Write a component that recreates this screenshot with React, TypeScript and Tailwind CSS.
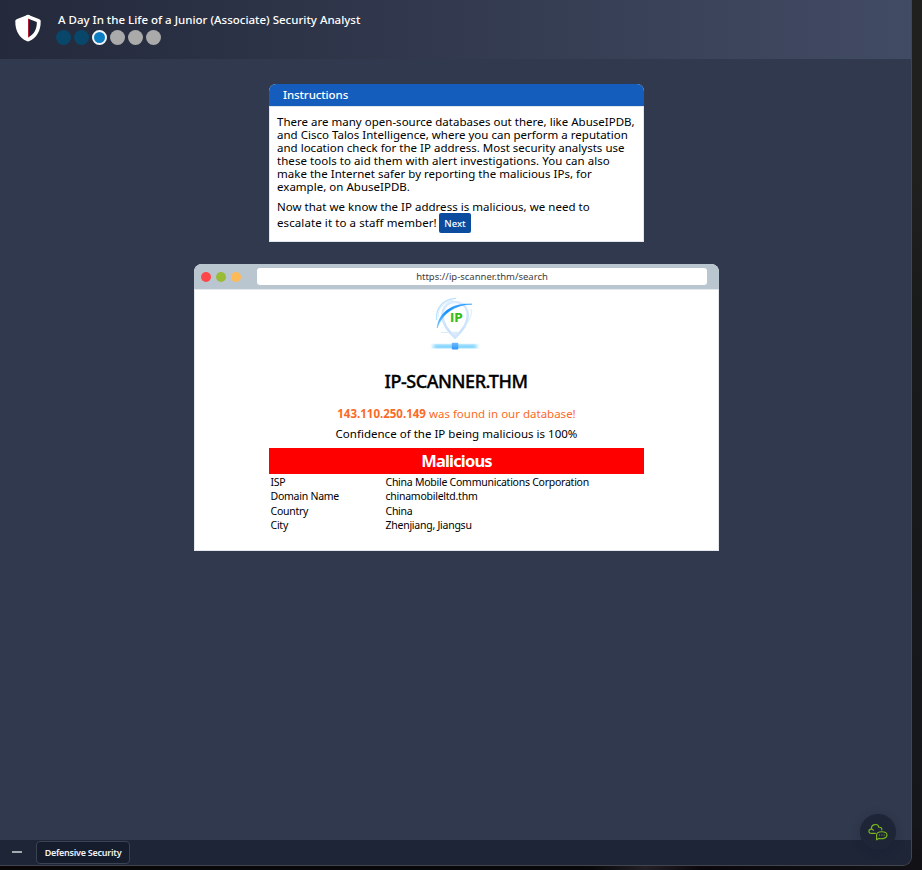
import React from "react";

const paragraph = [
  { text: "There are many open-source databases out there, like AbuseIPDB,", cls: "tracking-[0.01px]" },
  { text: "and Cisco Talos Intelligence, where you can perform a reputation", cls: "tracking-[0.01px]" },
  { text: "and location check for the IP address. Most security analysts use", cls: "tracking-[0.01px]" },
  { text: "these tools to aid them with alert investigations. You can also", cls: "tracking-[0.05px]" },
  { text: "make the Internet safer by reporting the malicious IPs, for", cls: "tracking-[0.02px]" },
  { text: "example, on AbuseIPDB.", cls: "tracking-[0.02px]" },
];

const details = [
  { label: "ISP", value: "China Mobile Communications Corporation", h: "h-[14px]" },
  { label: "Domain Name", value: "chinamobileltd.thm", h: "h-[14px]" },
  { label: "Country", value: "China", h: "h-[15px]" },
  { label: "City", value: "Zhenjiang, Jiangsu", h: "h-[14px]" },
];

function Shield() {
  return (
    <svg className="block" width="26" height="28" viewBox="0 0 26 28">
      <path d="M13 0.8 C14 0.8 14.6 1.2 15.5 1.7 L23.8 4.9 C25.3 5.4 25.7 6 25.7 7.4 C25.8 16.8 21.5 23.8 14.4 27 C13.4 27.5 12.6 27.5 11.6 27 C4.5 23.8 0.2 16.8 0.3 7.4 C0.3 6 0.7 5.4 2.2 4.9 L10.5 1.7 C11.4 1.2 12 0.8 13 0.8Z" fill="#fff" />
      <path d="M13.4 4.8 L21.8 8 C22 14.7 19.3 20.3 13.4 23.3Z" fill="#20263a" />
      <path d="M13.5 4.8V23.3" stroke="#b01c33" strokeWidth="1" />
    </svg>
  );
}

function ScannerLogo() {
  return (
    <svg className="block" width="54" height="58" viewBox="0 0 54 58">
      <defs>
        <linearGradient id="pin" x1="0" y1="0" x2="0" y2="1">
          <stop offset="0" stopColor="#dcebfe" />
          <stop offset="1" stopColor="#c5dffc" />
        </linearGradient>
        <linearGradient id="bar" x1="0" y1="0" x2="1" y2="0">
          <stop offset="0" stopColor="#8ad8ff" stopOpacity="0" />
          <stop offset=".12" stopColor="#8ad8ff" />
          <stop offset=".88" stopColor="#8ad8ff" />
          <stop offset="1" stopColor="#8ad8ff" stopOpacity="0" />
        </linearGradient>
        <linearGradient id="arc" x1="0" y1="1" x2="1" y2="0">
          <stop offset="0" stopColor="#6fc3ff" />
          <stop offset=".5" stopColor="#1490ff" />
          <stop offset="1" stopColor="#3ba4ff" />
        </linearGradient>
        <linearGradient id="cube" x1="0" y1="0" x2="0" y2="1">
          <stop offset="0" stopColor="#6db9ff" />
          <stop offset="1" stopColor="#2f95f8" />
        </linearGradient>
      </defs>
      <path d="M27 40.5 C21 35 14.5 27 14.5 18.5 C14.5 10 20 5 27 5 C34 5 39.8 10 39.8 18.5 C39.8 27 33 35 27 40.5Z" fill="#fff" stroke="url(#pin)" strokeWidth="2.6" />
      <path d="M21 36 L27 41.8 L33 36 C30 34.3 24 34.3 21 36Z" fill="#d3e7fd" opacity=".8" />
      <path d="M28 1.3 C16 1.5 7 11 8.7 23" fill="none" stroke="#b9e2ff" strokeWidth="1.2" />
      <path d="M25 3.2 C15 5 9.5 12 10.2 20" fill="none" stroke="#d5edff" strokeWidth="1" />
      <path d="M43 12 C44.5 19 40.5 25 36 29 M13 35.5H20" fill="none" stroke="#d5edff" strokeWidth="1" />
      <path d="M9.2 31 C10.5 16 24 5.5 44 7.2 C27 7.3 14 16.5 9.2 31Z" fill="url(#arc)" stroke="url(#arc)" strokeWidth=".6" />
      <text x="28.3" y="24.6" textAnchor="middle" fontFamily="'DejaVu Sans', sans-serif" fontWeight="700" fontSize="11.5" fill="#35bd16">IP</text>
      <rect x="2" y="46.8" width="50" height="4.8" fill="url(#bar)" opacity=".65" />
      <rect x="4" y="48.3" width="46" height="2.6" fill="url(#bar)" />
      <rect x="23.8" y="45.8" width="6.5" height="6.8" rx="1" fill="url(#cube)" />
    </svg>
  );
}

function ChatCloud() {
  return (
    <svg width="20" height="18" viewBox="0 0 20 18" fill="none" stroke="#78b51e" strokeWidth="1.15" strokeLinejoin="round" strokeLinecap="round">
      <path d="M7.4 10.4H3.4 C-.1 10.4 .2 6.1 3.3 6.1 C3.2 .6 10 .1 10.9 4.3 C13.3 4 14 5.4 13.8 6.9" />
      <path d="M3.5 6.2 C4.6 6.1 5.2 6.6 5.4 7.3" />
      <path d="M8.6 16.8V12 C8.6 7.6 19 7.6 19 12 C19 15.6 13.6 16.2 10.9 15.4 L8.6 16.8Z" />
      <path d="M11.4 12h.2M13.8 12h.2M16.2 12h.2" />
    </svg>
  );
}

export default function App() {
  return (
    <div className="h-[870px] w-[922px] overflow-hidden bg-[linear-gradient(90deg,#090708_0%,#08070a_64%,#222026_70%,#0a080d_76%,#111116_100%)] font-['Noto_Sans',sans-serif]">
      <div className="flex h-[870px] items-start bg-[linear-gradient(180deg,#20201f_0px,#20201f_170px,#191a1a_300px,#15161a_820px,transparent_866px)] bg-[length:11px_870px] bg-right bg-no-repeat">
        <div className="relative flex h-[866px] w-[912px] flex-col overflow-hidden rounded-br-[9px] border-r border-b border-[#42454c] bg-[#31394e]">
          <header className="flex h-[59px] shrink-0 items-start bg-[linear-gradient(90deg,#24293b_0%,#414b63_100%)] pl-[15px]">
            <div className="pt-[14px]"><Shield /></div>
            <div className="flex flex-col pt-[12px] pl-[15px]">
              <h1 className="ml-[2px] h-[16px] text-[11.5px] leading-[16px] font-medium tracking-[0px] whitespace-nowrap text-white">
                A Day In the Life of a Junior (Associate) Security Analyst
              </h1>
              <div className="mt-[2px] flex gap-[3px]">
                <i className="size-[15px] rounded-full bg-[#09476a]" />
                <i className="size-[15px] rounded-full bg-[#09476a]" />
                <i className="size-[15px] rounded-full border-2 border-[#f0f6fb] bg-[#0d7dc1]" />
                <i className="size-[15px] rounded-full bg-[#aaaaaa]" />
                <i className="size-[15px] rounded-full bg-[#aaaaaa]" />
                <i className="size-[15px] rounded-full bg-[#aaaaaa]" />
              </div>
            </div>
          </header>

          <main className="flex flex-1 flex-col items-center pt-[25px] pl-[2px] text-[11.5px] text-black">
            <section className="h-[158px] w-[375px] overflow-hidden rounded-t-[7px] bg-white">
              <h2 className="h-[22px] bg-[#145dbd] pl-[14px] text-[11.5px] leading-[22px] font-medium text-white">
                <span className="tracking-[-0.1px]">Instructions</span>
              </h2>
              <div className="h-[136px] border border-[#e2e5ea] pt-[8px] pl-[7px] leading-[13px] whitespace-nowrap">
                {paragraph.map((line) => (
                  <div key={line.text} className="h-[13px]"><span className={line.cls}>{line.text}</span></div>
                ))}
                <div className="mt-[7px] h-[13px]"><span className="tracking-[0.02px]">Now that we know the IP address is malicious, we need to</span></div>
                <div className="flex h-[20px] items-center">
                  <span className="w-[162px] pb-[2px] tracking-[0.09px]">escalate it to a staff member!</span>
                  <button className="h-[20px] w-[32px] rounded-[2px] bg-[#0b4c9f] pt-px text-[9.5px] leading-[19px] font-medium text-white">Next</button>
                </div>
              </div>
            </section>

            <section className="mt-[22px] flex h-[287px] w-[525px] flex-col overflow-hidden rounded-t-[8px] bg-white">
              <div className="flex h-[25px] shrink-0 items-center bg-[#bac6cf] pl-[7px]">
                <div className="flex gap-[5px]">
                  <i className="size-[10px] rounded-full bg-[#ff4649]" />
                  <i className="size-[10px] rounded-full bg-[#9abb35]" />
                  <i className="size-[10px] rounded-full bg-[#ffba58]" />
                </div>
                <div className="ml-[16px] h-[17px] w-[450px] rounded-[3px] bg-white text-center text-[9.5px] leading-[17px] text-[#3c3c3c]">
                  <span>https://ip-scanner.thm/search</span>
                </div>
              </div>
              <div className="flex flex-1 flex-col items-center border border-[#e4e8ec]">
                <div className="mt-[7px] mr-[3px] h-[58px]"><ScannerLogo /></div>
                <h3 className="mt-[15px] mr-[1px] h-[22px] text-[18px] leading-[22px] font-medium whitespace-nowrap [-webkit-text-stroke:0.35px_#000]"><span className="tracking-[-0.45px]">IP-SCANNER.THM</span></h3>
                <p className="mt-[15px] h-[14px] leading-[14px] text-[#fb6a26]"><b><span>143.110.250.149</span></b> <span>was found in our database!</span></p>
                <p className="mt-[6px] h-[14px] leading-[14px]"><span className="tracking-[0.02px]">Confidence of the IP being malicious is 100%</span></p>
                <div className="mt-[7px] h-[26px] w-[375px] bg-[#ff0000] text-center text-[16.5px] leading-[25px] font-bold text-white"><span className="tracking-[-0.85px]">Malicious</span></div>
                <dl className="mt-[2px] w-[375px] pl-[1.5px] text-[10.5px] tracking-[-0.25px]">
                  {details.map((d) => (
                    <div key={d.label} className={"flex items-center whitespace-nowrap " + d.h}>
                      <dt className="w-[115px]"><span>{d.label}</span></dt>
                      <dd><span>{d.value}</span></dd>
                    </div>
                  ))}
                </dl>
              </div>
            </section>
          </main>

          <footer className="flex h-[25px] shrink-0 items-center bg-[#1d2537] pl-[12px]">
            <i className="mb-[2px] h-[2px] w-[10px] bg-[#a4a8b0]" />
            <div className="ml-[14px] flex h-[23px] w-[94px] items-center justify-center rounded-[4px] border border-[#3a4253] bg-[#151c2b] pt-[1px] text-[9px] font-semibold whitespace-nowrap text-[#f0f2f5]">
              <span className="tracking-[-0.25px]">Defensive Security</span>
            </div>
          </footer>

          <div className="absolute top-[814px] left-[860px] flex size-[36px] items-center justify-center rounded-full bg-[#1d2537] shadow-[0_2px_10px_rgba(20,28,45,0.3)]">
            <ChatCloud />
          </div>
        </div>
      </div>
    </div>
  );
}
